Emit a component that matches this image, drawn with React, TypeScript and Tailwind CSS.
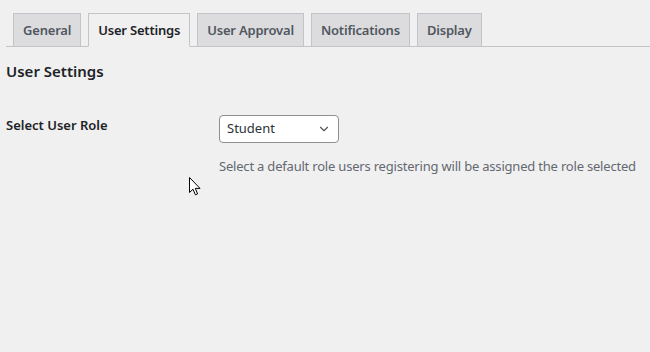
import React, { useState } from 'react';
import { ChevronDown } from 'lucide-react';

const tabs = ['General', 'User Settings', 'User Approval', 'Notifications', 'Display'];

const font = { fontFamily: '"Noto Sans", "Open Sans", Arial, sans-serif' };

export default function App() {
  const [active, setActive] = useState('User Settings');
  const [role, setRole] = useState('Student');

  return (
    <div className="relative w-[650px] h-[352px] bg-[#f0f0f1] overflow-hidden" style={font}>
      {/* Tabs */}
      <div className="flex items-end pt-[13px] ml-[6px] border-b border-[#c3c4c7]">
        {tabs.map((tab) => (
          <button
            key={tab}
            onClick={() => setActive(tab)}
            className={`ml-[7px] -mb-px px-[9px] h-[34px] border border-[#c3c4c7] text-[13px] font-semibold tracking-[-0.2px] leading-[32px] ${
              active === tab
                ? 'bg-[#f0f0f1] border-b-[#f0f0f1] text-[#1d2327]'
                : 'bg-[#dcdcde] text-[#50575e]'
            }`}
          >
            {tab}
          </button>
        ))}
      </div>

      {/* Content */}
      <div className="px-[6px]">
        <h2 className="mt-[13px] text-[15px] font-semibold text-[#1d2327] leading-[22px]">User Settings</h2>

        <div className="flex mt-[33px]">
          <div className="w-[213px] shrink-0 pt-[1px] text-[13px] font-semibold text-[#1d2327]">
            Select User Role
          </div>
          <div>
            <div className="relative w-[120px]">
              <select
                value={role}
                onChange={(e) => setRole(e.target.value)}
                className="appearance-none block w-full h-[28px] pl-[7px] pr-6 border border-[#8c8f94] rounded-[4px] bg-white text-[13px] text-[#2c3338] outline-none"
              >
                <option>Student</option>
                <option>Subscriber</option>
                <option>Instructor</option>
              </select>
              <ChevronDown
                size={14}
                strokeWidth={2}
                className="absolute right-[8px] top-[7px] text-[#50575e] pointer-events-none"
              />
            </div>
            <p className="mt-[14px] whitespace-nowrap text-[13px] tracking-[-0.2px] text-[#646970]">
              Select a default role users registering will be assigned the role selected
            </p>
          </div>
        </div>
      </div>

      {/* Mouse cursor */}
      <svg className="absolute left-[189px] top-[177px]" width="12" height="19" viewBox="0 0 12 19">
        <path
          d="M0.5 0.5 L0.5 15.5 L4 12.2 L6.4 17.8 L8.6 16.9 L6.3 11.4 L11 11.4 Z"
          fill="white"
          stroke="black"
          strokeWidth="1"
          strokeLinejoin="round"
        />
      </svg>
    </div>
  );
}
